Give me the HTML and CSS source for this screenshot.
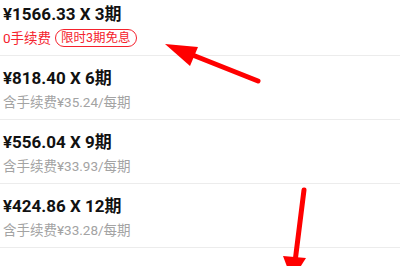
FILE: index.html
```html
<!DOCTYPE html>
<html lang="zh">
<head>
<meta charset="utf-8">
<link rel="stylesheet" href="styles.css">
</head>
<body>
<div class="list">
  <div class="item">
    <div class="title">¥1566.33 X 3期</div>
    <div class="sub"><span class="red">0手续费</span><span class="badge">限时3期免息</span></div>
  </div>
  <div class="item">
    <div class="title">¥818.40 X 6期</div>
    <div class="sub gray">含手续费¥35.24/每期</div>
  </div>
  <div class="item">
    <div class="title">¥556.04 X 9期</div>
    <div class="sub gray">含手续费¥33.93/每期</div>
  </div>
  <div class="item">
    <div class="title">¥424.86 X 12期</div>
    <div class="sub gray">含手续费¥33.28/每期</div>
  </div>
</div>
<svg class="arrows" width="400" height="266" viewBox="0 0 400 266">
  <line x1="258" y1="81" x2="185" y2="52" stroke="#ff0000" stroke-width="5" stroke-linecap="round"/>
  <polygon points="165,44 198,47 190,66" fill="#ff0000"/>
  <line x1="304" y1="190" x2="295" y2="262" stroke="#ff0000" stroke-width="5" stroke-linecap="round"/>
  <polygon points="283,256 306,258 292,280" fill="#ff0000"/>
</svg>
</body>
</html>
```

FILE: styles.css
```css
html, body {
  margin: 0;
  padding: 0;
  background: #ffffff;
  overflow: hidden;
}
body {
  width: 400px;
  height: 266px;
  position: relative;
  font-family: Roboto, "Noto Sans CJK SC", sans-serif;
}
.list {
  margin-top: -8px;
}
.item {
  height: 63px;
  border-bottom: 1px solid #ececec;
  padding-left: 3px;
  display: flex;
  flex-direction: column;
}
.title {
  margin-top: 12px;
  height: 20px;
  line-height: 20px;
  font-size: 17px;
  font-weight: bold;
  color: #111111;
}
.sub {
  margin-top: 4px;
  height: 20px;
  line-height: 20px;
  font-size: 13.5px;
  display: flex;
  align-items: center;
}
.gray {
  color: #a3a3a3;
}
.red {
  color: #f5222d;
}
.badge {
  margin-left: 4px;
  border: 1px solid #f5222d;
  border-radius: 9px;
  color: #f5222d;
  font-size: 12.5px;
  line-height: 16px;
  padding: 0 5px;
}
.arrows {
  position: absolute;
  left: 0;
  top: 0;
}
```
